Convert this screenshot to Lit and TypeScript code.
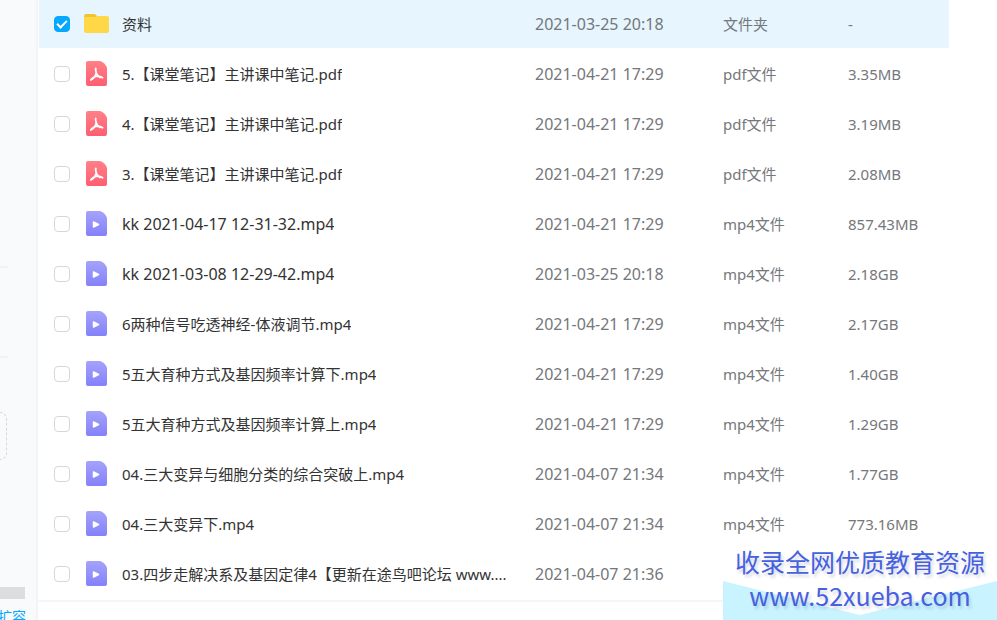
import { LitElement, html, css, svg } from "lit";
import { customElement, state } from "lit/decorators.js";
import { classMap } from "lit/directives/class-map.js";

type Kind = "folder" | "pdf" | "mp4";

interface FileRow {
  name: string;
  date: string;
  kind: Kind;
  type: string;
  size: string;
  checked?: boolean;
}

const FILES: FileRow[] = [
  { name: "资料", date: "2021-03-25 20:18", kind: "folder", type: "文件夹", size: "-", checked: true },
  { name: "5.【课堂笔记】主讲课中笔记.pdf", date: "2021-04-21 17:29", kind: "pdf", type: "pdf文件", size: "3.35MB" },
  { name: "4.【课堂笔记】主讲课中笔记.pdf", date: "2021-04-21 17:29", kind: "pdf", type: "pdf文件", size: "3.19MB" },
  { name: "3.【课堂笔记】主讲课中笔记.pdf", date: "2021-04-21 17:29", kind: "pdf", type: "pdf文件", size: "2.08MB" },
  { name: "kk 2021-04-17 12-31-32.mp4", date: "2021-04-21 17:29", kind: "mp4", type: "mp4文件", size: "857.43MB" },
  { name: "kk 2021-03-08 12-29-42.mp4", date: "2021-03-25 20:18", kind: "mp4", type: "mp4文件", size: "2.18GB" },
  { name: "6两种信号吃透神经-体液调节.mp4", date: "2021-04-21 17:29", kind: "mp4", type: "mp4文件", size: "2.17GB" },
  { name: "5五大育种方式及基因频率计算下.mp4", date: "2021-04-21 17:29", kind: "mp4", type: "mp4文件", size: "1.40GB" },
  { name: "5五大育种方式及基因频率计算上.mp4", date: "2021-04-21 17:29", kind: "mp4", type: "mp4文件", size: "1.29GB" },
  { name: "04.三大变异与细胞分类的综合突破上.mp4", date: "2021-04-07 21:34", kind: "mp4", type: "mp4文件", size: "1.77GB" },
  { name: "04.三大变异下.mp4", date: "2021-04-07 21:34", kind: "mp4", type: "mp4文件", size: "773.16MB" },
  { name: "03.四步走解决系及基因定律4【更新在途鸟吧论坛 www....", date: "2021-04-07 21:36", kind: "mp4", type: "", size: "" },
];

const isLatin = (s: string) => /^[\x20-\x7e]+$/.test(s);

const ICONS = {
  folder: svg`
    <path d="M0 4V2a2 2 0 0 1 2-2h8a3 3 0 0 1 2 1l2 2V4Z" fill="#f2c434"/>
    <path d="M0 3H11L14 2H23a2 2 0 0 1 2 2V17a2 2 0 0 1-2 2H2a2 2 0 0 1-2-2Z" fill="#ffd747"/>`,
  pdf: svg`
    <defs><linearGradient id="g" x1="0" y1="0" x2="0" y2="1">
      <stop offset="0" stop-color="#ff8187"/><stop offset="1" stop-color="#ff5d72"/>
    </linearGradient></defs>
    <path d="M2 0H14Q19 1.500 21 7V23a2 2 0 0 1-2 2H2a2 2 0 0 1-2-2V2a2 2 0 0 1 2-2Z" fill="url(#g)"/>
    <path d="M9.800 7.500C9.200 8.600 10 10.600 10.300 12C9.600 14.600 7.500 17.800 4.800 19C6.500 16.500 9.500 15.300 12 15.100C13.800 15.200 15.600 16 16.600 16.700M10.300 12C10.700 13.600 12 15 14 16.400"
      fill="none" stroke="#fff" stroke-width="1.800" stroke-linecap="round" stroke-linejoin="round"/>`,
  mp4: svg`
    <defs><linearGradient id="g" x1="0" y1="0" x2="0" y2="1">
      <stop offset="0" stop-color="#a5a3fb"/><stop offset="1" stop-color="#8481fa"/>
    </linearGradient></defs>
    <path d="M2 0H14Q19 1.500 21 7V23a2 2 0 0 1-2 2H2a2 2 0 0 1-2-2V2a2 2 0 0 1 2-2Z" fill="url(#g)"/>
    <path d="M7.500 11L12.500 13.500L7.500 16Z" fill="#fff" stroke="#fff" stroke-width="1.500" stroke-linejoin="round"/>`,
};

@customElement("file-icon")
class FileIcon extends LitElement {
  static properties = { kind: {} };
  declare kind: Kind;

  static styles = css`
    :host {
      display: flex;
      justify-content: center;
      flex: none;
      width: 25px;
      padding-bottom: 2px;
    }
    svg {
      display: block;
    }
  `;

  render() {
    const folder = this.kind === "folder";
    const w = folder ? 25 : 21;
    const h = folder ? 19 : 25;
    return html`<svg width=${w} height=${h} viewBox="0 0 ${w} ${h}" aria-hidden="true">
      ${ICONS[this.kind]}
    </svg>`;
  }
}

@customElement("app-root")
class AppRoot extends LitElement {
  @state() files = FILES;

  static styles = css`
    :host {
      display: flex;
      position: relative;
      height: 100vh;
      overflow: hidden;
      background: #fff;
      color: #333;
      font: 15px/20px "Noto Sans", "Noto Sans CJK SC", sans-serif;
    }
    .side {
      box-sizing: border-box;
      flex: none;
      display: flex;
      flex-direction: column;
      width: 38px;
      padding-top: 266px;
      background: #f8fafc;
      border-right: 2px solid #f3f4f6;
      overflow: hidden;
    }
    .rule {
      flex: none;
      width: 8px;
      height: 2px;
      margin: 0 0 88px;
      border: 0;
      background: #f1f2f4;
    }
    .rule.last {
      margin-bottom: 54px;
    }
    .drop {
      box-sizing: border-box;
      flex: none;
      width: 7px;
      height: 48px;
      border: 1px dashed #d5d7da;
      border-left: 0;
      border-radius: 0 8px 8px 0;
    }
    .quota {
      flex: none;
      width: 25px;
      height: 12px;
      margin-top: 127px;
      background: #dcdddf;
    }
    .expand {
      flex: none;
      display: flex;
      justify-content: flex-end;
      width: 26px;
      margin-top: 8px;
      color: #06a7ff;
      font-size: 14px;
      text-decoration: none;
      white-space: nowrap;
    }
    .main {
      flex: 1;
      min-width: 0;
    }
    .list {
      padding: 0 48px 0 1px;
      border-bottom: 2px solid #f5f6f7;
    }
    table {
      width: 100%;
      table-layout: fixed;
      border-spacing: 0;
    }
    .c-date {
      width: 188px;
    }
    .c-type {
      width: 125px;
    }
    .c-size {
      width: 101px;
    }
    td {
      height: 48px;
      padding: 0;
      border-bottom: 2px solid #fff;
      background-clip: padding-box;
      color: #75777b;
      white-space: nowrap;
    }
    .picked td {
      background-color: #e6f5fe;
    }
    .latin {
      font-size: 16px;
    }
    .name {
      display: flex;
      align-items: center;
      padding-left: 15px;
      color: #333;
    }
    .box {
      appearance: none;
      flex: none;
      display: grid;
      place-items: center;
      box-sizing: border-box;
      width: 16px;
      height: 16px;
      margin: 0 14px 0 0;
      border: 1px solid #d4d6d9;
      border-radius: 4px;
      background: #fff;
    }
    .box:checked {
      border-color: #06a7ff;
      background: #06a7ff;
    }
    .box:checked::after {
      content: "";
      box-sizing: border-box;
      width: 10px;
      height: 6px;
      margin-bottom: 3px;
      border: solid #fff;
      border-width: 0 0 2px 2px;
      transform: rotate(-45deg);
    }
    .label {
      margin-left: 13px;
      overflow: hidden;
    }
    .promo {
      position: absolute;
      right: 0;
      bottom: 0;
      width: 274px;
      height: 76px;
      background: #fff;
      color: #4560e0;
      font: 25px/34px "Noto Sans CJK SC", sans-serif;
      text-align: center;
      text-shadow: 2px 3px 3px rgba(120, 130, 160, 0.3);
    }
    .promo svg {
      position: absolute;
      right: 0;
      bottom: 0;
      width: 100%;
      height: 39px;
    }
    .promo p {
      position: relative;
      margin: 0;
    }
  `;

  private toggle(i: number) {
    this.files = this.files.map((f, n) => (n === i ? { ...f, checked: !f.checked } : f));
  }

  render() {
    return html`
      <aside class="side">
        <hr class="rule" />
        <hr class="rule last" />
        <div class="drop"></div>
        <div class="quota"></div>
        <a class="expand" href="#">扩容</a>
      </aside>
      <main class="main">
        <div class="list">
          <table>
            <colgroup>
              <col />
              <col class="c-date" />
              <col class="c-type" />
              <col class="c-size" />
            </colgroup>
            <tbody>
              ${this.files.map(
                (f, i) => html`<tr class=${classMap({ picked: !!f.checked })}>
                  <td>
                    <div class="name">
                      <input class="box" type="checkbox" id="f${i}" .checked=${!!f.checked}
                        @change=${() => this.toggle(i)} />
                      <file-icon .kind=${f.kind}></file-icon>
                      <label class=${classMap({ label: true, latin: isLatin(f.name) })} for="f${i}">${f.name}</label>
                    </div>
                  </td>
                  <td class="latin">${f.date}</td>
                  <td>${f.type}</td>
                  <td>${f.size}</td>
                </tr>`
              )}
            </tbody>
          </table>
        </div>
      </main>
      <div class="promo">
        <svg viewBox="0 0 274 39" preserveAspectRatio="none" aria-hidden="true">
          <path d="M0 0L137 34L274 0V39H0Z" fill="#c9f4ff" />
        </svg>
        <p>收录全网优质教育资源</p>
        <p>www.52xueba.com</p>
      </div>
    `;
  }
}
